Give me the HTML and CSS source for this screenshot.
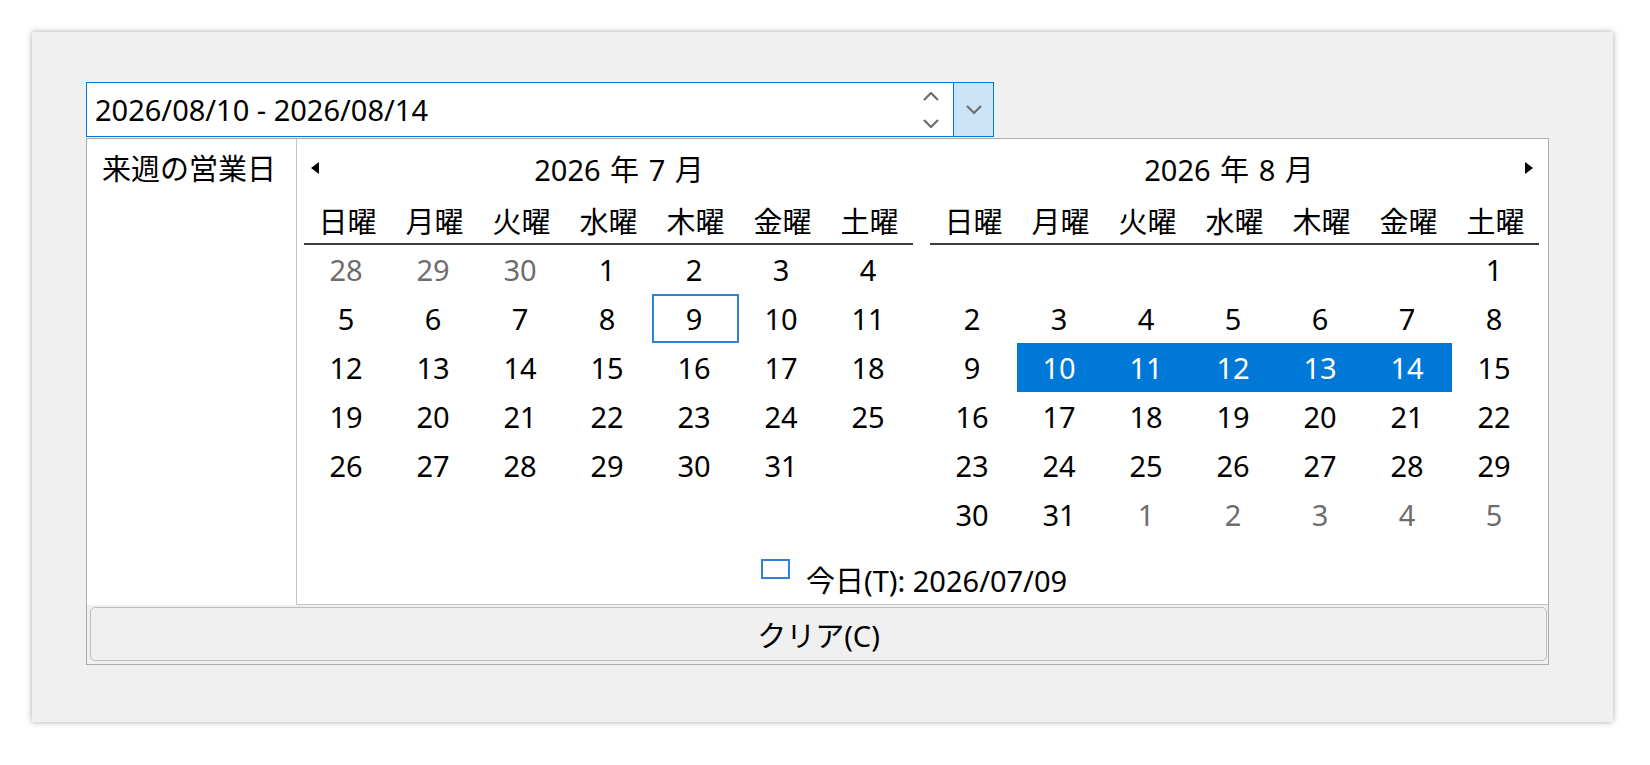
FILE: index.html
```html
<!DOCTYPE html>
<html lang="ja">

<head>
    <meta charset="UTF-8">
    <meta name="viewport" content="width=device-width, initial-scale=1.0">
    <title>期間選択</title>
    <link rel="stylesheet" href="styles.css">
</head>

<body>
    <div class="window">
        <div class="combo">
            <div class="combo-field">
                <span class="value">2026/08/10 - 2026/08/14</span>
                <svg class="spin" width="16" height="36" viewBox="0 0 16 36">
                    <polyline points="1,8 8,1 15,8" />
                    <polyline points="1,28 8,35 15,28" />
                </svg>
            </div>
            <div class="combo-btn">
                <svg width="16" height="10" viewBox="0 0 16 10">
                    <polyline points="1,1 8,8 15,1" />
                </svg>
            </div>
        </div>

        <div class="popup">
            <div class="popup-main">
                <div class="presets">
                    <div class="preset">来週の営業日</div>
                </div>

                <div class="calendar">
                    <div class="months">
                        <div class="month">
                            <div class="month-head">
                                <span class="nav"><i class="tri-left"></i></span>
                                <span class="title">2026 年 7 月</span>
                            </div>
                            <div class="weekdays">
                                <span>日曜</span><span>月曜</span><span>火曜</span><span>水曜</span><span>木曜</span><span>金曜</span><span>土曜</span>
                            </div>
                            <div class="days">
                                <span class="d muted">28</span><span class="d muted">29</span><span class="d muted">30</span><span class="d">1</span><span class="d">2</span><span class="d">3</span><span class="d">4</span>
                                <span class="d">5</span><span class="d">6</span><span class="d">7</span><span class="d">8</span><span class="d today">9</span><span class="d">10</span><span class="d">11</span>
                                <span class="d">12</span><span class="d">13</span><span class="d">14</span><span class="d">15</span><span class="d">16</span><span class="d">17</span><span class="d">18</span>
                                <span class="d">19</span><span class="d">20</span><span class="d">21</span><span class="d">22</span><span class="d">23</span><span class="d">24</span><span class="d">25</span>
                                <span class="d">26</span><span class="d">27</span><span class="d">28</span><span class="d">29</span><span class="d">30</span><span class="d">31</span>
                            </div>
                        </div>

                        <div class="month">
                            <div class="month-head">
                                <span class="title next">2026 年 8 月</span>
                                <span class="nav"><i class="tri-right"></i></span>
                            </div>
                            <div class="weekdays">
                                <span>日曜</span><span>月曜</span><span>火曜</span><span>水曜</span><span>木曜</span><span>金曜</span><span>土曜</span>
                            </div>
                            <div class="days">
                                <span class="d"></span><span class="d"></span><span class="d"></span><span class="d"></span><span class="d"></span><span class="d"></span><span class="d">1</span>
                                <span class="d">2</span><span class="d">3</span><span class="d">4</span><span class="d">5</span><span class="d">6</span><span class="d">7</span><span class="d">8</span>
                                <span class="d">9</span><span class="d sel">10</span><span class="d sel">11</span><span class="d sel">12</span><span class="d sel">13</span><span class="d sel">14</span><span class="d">15</span>
                                <span class="d">16</span><span class="d">17</span><span class="d">18</span><span class="d">19</span><span class="d">20</span><span class="d">21</span><span class="d">22</span>
                                <span class="d">23</span><span class="d">24</span><span class="d">25</span><span class="d">26</span><span class="d">27</span><span class="d">28</span><span class="d">29</span>
                                <span class="d">30</span><span class="d">31</span><span class="d muted">1</span><span class="d muted">2</span><span class="d muted">3</span><span class="d muted">4</span><span class="d muted">5</span>
                            </div>
                        </div>
                    </div>

                    <div class="today-bar">
                        <span class="today-mark"></span>
                        <span class="today-text">今日(T): 2026/07/09</span>
                    </div>
                </div>
            </div>

            <button class="clear">クリア(C)</button>
        </div>
    </div>
</body>

</html>
```

FILE: styles.css
```css
* {
    box-sizing: border-box;
    padding: 0;
    margin: 0;
}

body {
    background-color: white;
    font-family: "Noto Sans", "Noto Sans CJK JP", sans-serif;
    font-size: 29px;
    color: black;
    padding: 32px;
}

.window {
    width: 1581px;
    height: 690px;
    background-color: #f0f0f0;
    box-shadow: 0 0 6px rgba(0, 0, 0, 0.35);
    padding: 50px 0 0 54px;
}

/* combo box */
.combo {
    display: flex;
    width: 908px;
    height: 55px;
}

.combo-field {
    flex: 1;
    display: flex;
    align-items: center;
    background-color: white;
    border: 1px solid #0078d7;
    border-right: none;
    padding-left: 8px;
}

.combo-field .value {
    flex: 1;
}

.spin {
    margin-right: 14px;
}

.combo-field polyline,
.combo-btn polyline {
    fill: none;
    stroke: #6e6e6e;
    stroke-width: 2.2;
}

.combo-btn {
    width: 41px;
    background-color: #cce4f7;
    border: 1px solid #0078d7;
    display: flex;
    align-items: center;
    justify-content: center;
}

/* popup */
.popup {
    width: 1463px;
    height: 527px;
    margin-top: 1px;
    border: 1px solid #adadad;
    background-color: #f0f0f0;
}

.popup-main {
    display: flex;
    height: 466px;
}

.presets {
    width: 209px;
    background-color: white;
    padding: 12px 0 0 15px;
    line-height: 36px;
}

.calendar {
    flex: 1;
    background-color: white;
    border-left: 1px solid #c4c4c4;
    border-bottom: 1px solid #c4c4c4;
    padding: 0 8px 0 7px;
}

.months {
    display: flex;
    gap: 17px;
}

.month {
    width: 609px;
}

.month-head {
    display: flex;
    align-items: center;
    height: 58px;
}

.nav {
    width: 21px;
    display: flex;
    align-items: center;
    justify-content: center;
}

.tri-left {
    border-right: 8px solid black;
    border-top: 6.5px solid transparent;
    border-bottom: 6.5px solid transparent;
}

.tri-right {
    border-left: 8px solid black;
    border-top: 6.5px solid transparent;
    border-bottom: 6.5px solid transparent;
}

.title {
    flex: 1;
    text-align: center;
    word-spacing: 2px;
}

.title.next {
    padding-left: 10px;
}

.weekdays {
    display: grid;
    grid-template-columns: repeat(7, 1fr);
    align-items: center;
    height: 48px;
    text-align: center;
    border-bottom: 2px solid #3c3c3c;
}

.days {
    display: grid;
    grid-template-columns: repeat(7, 1fr);
    grid-template-rows: repeat(6, 49px);
}

.d {
    display: flex;
    align-items: center;
    justify-content: center;
    padding-right: 3px;
}

.d.muted {
    color: #6d6d6d;
}

.d.sel {
    background-color: #0078d7;
    color: white;
}

.d.today {
    border: 2px solid #2f82d8;
}

.today-bar {
    display: flex;
    justify-content: center;
    align-items: flex-start;
    height: 64px;
    padding-top: 20px;
    padding-right: 16px;
}

.today-mark {
    width: 29px;
    height: 20px;
    border: 2px solid #2f82d8;
    margin-right: 16px;
}

.today-text {
    margin-top: 5px;
    line-height: 34px;
}

.clear {
    display: block;
    width: 1457px;
    height: 54px;
    margin: 2px 0 0 3px;
    font-family: inherit;
    font-size: 29px;
    color: black;
    background-color: #f0f0f0;
    border: 1px solid #bdbdbd;
    border-radius: 5px;
}
```
